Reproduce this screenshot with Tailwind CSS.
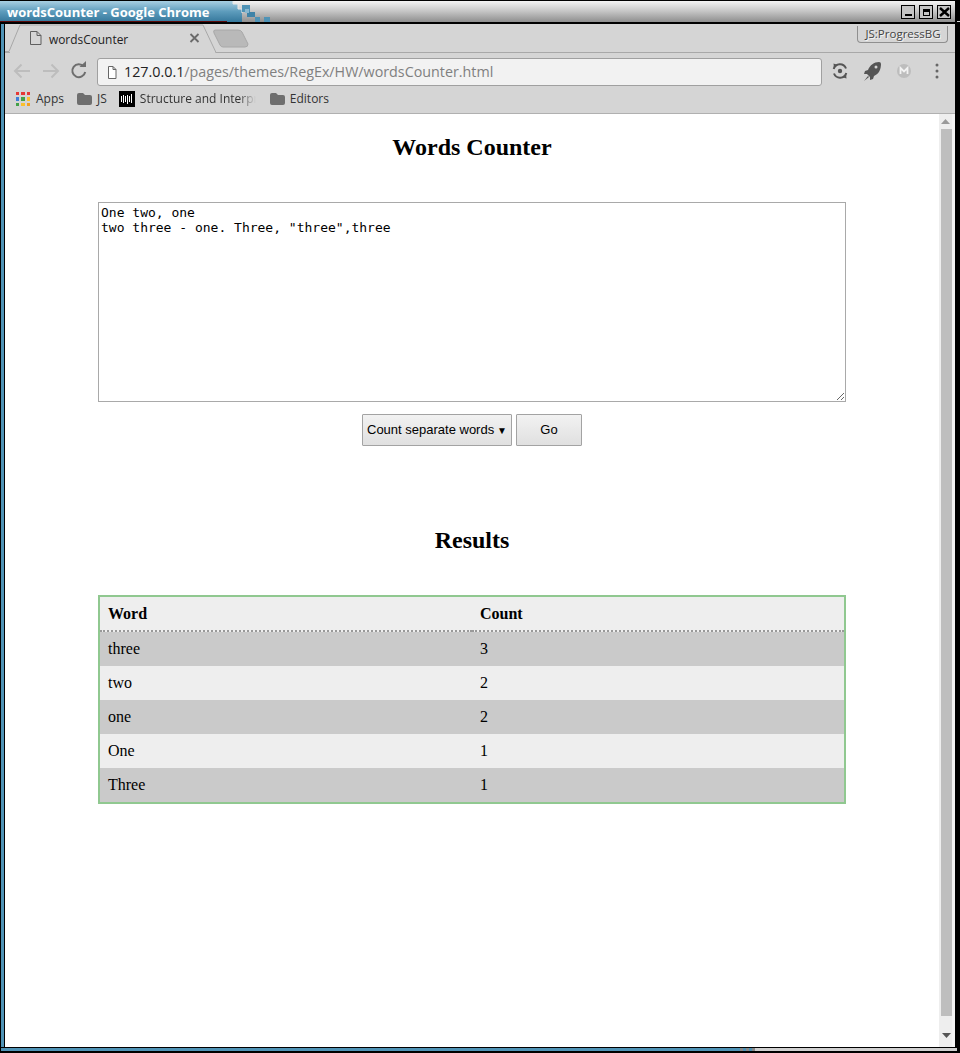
<!DOCTYPE html>
<html lang="en">
<head>
  <meta charset="UTF-8" />
  <title>wordsCounter</title>
  <script src="https://cdn.jsdelivr.net/npm/@tailwindcss/browser@4"></script>
</head>
<body class="bg-white overflow-hidden">
<div class="w-[960px] h-[1053px] flex flex-col bg-black overflow-hidden">

  <!-- window title bar -->
  <div class="relative h-[22px] shrink-0 flex bg-black pt-[1px]">
    <div class="w-[228px] h-full shrink-0 bg-gradient-to-b from-[#a8cfe2] via-[#5d9cbc] to-[#35789c] pl-[7px] text-white font-bold text-[13px] leading-[23px] font-['Open_Sans',sans-serif] whitespace-nowrap">wordsCounter - Google Chrome</div>
    <div class="w-[727px] h-full relative bg-gradient-to-b from-[#f4f4f4] via-[#c4c4c4] to-[#8f8f8f] flex">
      <svg width="48" height="21" class="shrink-0">
        <defs>
          <linearGradient id="titleBlue" x1="0" y1="0" x2="0" y2="1">
            <stop offset="0" stop-color="#a8cfe2"/><stop offset="0.5" stop-color="#5d9cbc"/><stop offset="1" stop-color="#35789c"/>
          </linearGradient>
        </defs>
        <path d="M0 0 H5 V3 H10 V8 H14 V21 H0Z" fill="url(#titleBlue)"/>
        <path d="M5 0 V3 H10 V8 H14 V12" fill="none" stroke="#e8e8e8"/>
        <rect x="14" y="4" width="8" height="7" fill="#4f93b6"/>
        <rect x="19" y="11" width="8" height="5" fill="#3f83a8"/>
        <rect x="27" y="16" width="5" height="5" fill="#4f93b6"/>
        <rect x="36" y="16" width="6" height="5" fill="#4f93b6"/>
        <rect x="17" y="8" width="4" height="4" fill="#8ab8d0"/>
      </svg>
      <div class="flex-1"></div>
      <div class="flex items-start gap-[4px] pr-[4px] pt-[4px]">
        <div class="w-[14px] h-[14px] bg-[#c4c4c4] border border-black flex items-end justify-center pb-[2px]"><div class="w-[7px] h-[2px] bg-black"></div></div>
        <div class="w-[14px] h-[14px] bg-[#c4c4c4] border border-black flex items-center justify-center"><div class="w-[7px] h-[7px] border border-black border-t-[3px]"></div></div>
        <div class="w-[14px] h-[14px] bg-[#c4c4c4] border border-black flex items-center justify-center">
          <svg width="11" height="10"><path d="M1 1 L10 9 M10 1 L1 9" stroke="#000" stroke-width="2.4"/></svg>
        </div>
      </div>
    </div>
    <div class="absolute left-0 bottom-0 w-[227px] h-[1px] bg-[#5a0a0a]"></div>
    <div class="absolute right-0 bottom-0 w-[3px] h-[1px] bg-[#d8d8d8]"></div>
  </div>
  <div class="h-[2px] shrink-0 bg-black"></div>

  <div class="flex-1 flex min-h-0">
    <!-- left frame -->
    <div class="w-[1px] bg-black"></div>
    <div class="w-[3px] bg-[#4f93b6]"></div>
    <div class="w-[1px] bg-black"></div>

    <div class="w-[950px] flex flex-col min-h-0 bg-white">
      <!-- tab strip -->
      <div class="relative h-[29px] shrink-0 bg-[#d5d5d5] border-b border-[#a8a8a8] font-['Open_Sans',sans-serif]">
        <svg width="250" height="29" class="absolute left-0 top-0">
          <path d="M0 27.5 H4 L15 1 H198 L211 28.5" fill="#d5d5d5" stroke="#a8a8a8"/>
          <path d="M5 29 H210" stroke="#d5d5d5" stroke-width="2"/>
          <path d="M210 6 H233 Q236 6 237 8 L243 20 Q243 23 240 23 H218 Q216 23 215 21 L209 9 Q208 6 210 6Z" fill="#b9b9b9" stroke="#a8a8a8"/>
          <path d="M25.500 7.500 H32 L36 11.500 V20.500 H25.500Z M32 7.500 V11.500 H36" fill="none" stroke="#5f5f5f"/>
          <path d="M185.500 10 L193.500 18 M193.500 10 L185.500 18" stroke="#6a6a6a" stroke-width="1.800"/>
        </svg>
        <span class="absolute left-[44px] top-[5px] text-[11.900px] leading-[20px] text-[#222]">wordsCounter</span>
        <div class="absolute right-[7px] top-[2px] w-[91px] h-[17px] pl-[1px] border border-t-0 border-[#8f8f8f] rounded-b-[4px] text-[11.500px] leading-[15px] text-center text-[#444] [text-shadow:1px_1px_0_#f4f4f4] whitespace-nowrap">JS:ProgressBG</div>
      </div>

      <!-- toolbar -->
      <div class="h-[34px] shrink-0 bg-[#d5d5d5] flex items-center relative">
        <svg width="92" height="34" class="shrink-0">
          <path d="M25 18 H10 M16.500 11.500 L10 18 L16.500 24.500" fill="none" stroke="#bdbdbd" stroke-width="2"/>
          <path d="M38 18 H53 M46.500 11.500 L53 18 L46.500 24.500" fill="none" stroke="#bdbdbd" stroke-width="2"/>
          <path d="M78.800 13.500 A6.500 6.500 0 1 0 80.200 19" fill="none" stroke="#6e6e6e" stroke-width="2"/>
          <path d="M74.500 14 H81 V8Z" fill="#6e6e6e"/>
        </svg>
        <div class="w-[725px] h-[28px] mt-[3px] bg-[#f2f2f2] border border-[#a0a0a0] rounded-[3px] flex items-center font-['Open_Sans',sans-serif] text-[14.3px] whitespace-nowrap">
          <svg width="26" height="26" class="shrink-0"><path d="M10.500 7.500 H15 L18 10.500 V19.500 H10.500Z M15 7.500 V10.500 H18" fill="#fff" stroke="#666"/></svg>
          <span class="text-[#222]">127.0.0.1</span><span class="text-[#808080]">/pages/themes/RegEx/HW/wordsCounter.html</span>
        </div>
        <svg width="125" height="34" class="shrink-0 ml-[1px]">
          <path d="M10.700 16 A6.500 6.500 0 0 1 23 15.500" fill="none" stroke="#555" stroke-width="2"/>
          <path d="M23.300 20 A6.500 6.500 0 0 1 11 20.500" fill="none" stroke="#555" stroke-width="2"/>
          <path d="M10.500 10.500 L15 12 L11 15.500Z M23.500 25.500 L19 24 L23 20.500Z" fill="#555"/>
          <circle cx="17" cy="18" r="2.200" fill="#555"/>
          <g transform="translate(1,0)">
            <path d="M55 9 C50 9 46 12 44 17 L41 18 L40 21 L43 21 L46 24 L46 27 L49 26 L50 23 C55 21 57 16 57 11 Q57 9 55 9Z" fill="#555"/>
            <path d="M40 28 L44 23 L45 24Z" fill="#555"/>
            <circle cx="52" cy="14" r="1.500" fill="#d5d5d5"/>
          </g>
          <circle cx="81" cy="18" r="7" fill="#bdbdbd"/>
          <path d="M77.500 21 V15 L81 18.500 L84.500 15 V21" fill="none" stroke="#f2f2f2" stroke-width="1.800"/>
          <circle cx="114" cy="12" r="1.500" fill="#666"/><circle cx="114" cy="18" r="1.500" fill="#666"/><circle cx="114" cy="24" r="1.500" fill="#666"/>
        </svg>
      </div>

      <!-- bookmarks -->
      <div class="h-[27px] shrink-0 bg-[#d5d5d5] border-b border-[#b0b0b0] relative flex items-center pb-[2px] font-['Open_Sans',sans-serif] text-[12px] text-[#333] whitespace-nowrap">
        <div class="grid grid-cols-3 gap-[2px] w-[14px] h-[14px] ml-[11px]">
          <i class="bg-[#e53935]"></i><i class="bg-[#e53935]"></i><i class="bg-[#e53935]"></i>
          <i class="bg-[#3f7fd8]"></i><i class="bg-[#43a047]"></i><i class="bg-[#fbc02d]"></i>
          <i class="bg-[#43a047]"></i><i class="bg-[#fbc02d]"></i><i class="bg-[#f4a020]"></i>
        </div>
        <span class="ml-[6px]">Apps</span>
        <svg width="15" height="12" class="ml-[13px] shrink-0"><path d="M0 2 Q0 0 2 0 H6 L8 2 H13 Q15 2 15 4 V10 Q15 12 13 12 H2 Q0 12 0 10Z" fill="#6e6e6e"/></svg>
        <span class="ml-[5px]">JS</span>
        <div class="ml-[12px] w-[16px] h-[16px] bg-black flex items-center justify-center shrink-0">
          <svg width="14" height="12"><path d="M1.500 3 V9 M3.500 2 V10 M5.500 3 V9 M7.500 2 V11 M9.500 3 V9 M11.500 1 V10" stroke="#fff"/></svg>
        </div>
        <span class="ml-[5px] w-[116px] h-[18px] overflow-hidden [mask-image:linear-gradient(to_right,#000_85%,transparent)]">Structure and Interpr</span>
        <svg width="15" height="12" class="ml-[14px] shrink-0"><path d="M0 2 Q0 0 2 0 H6 L8 2 H13 Q15 2 15 4 V10 Q15 12 13 12 H2 Q0 12 0 10Z" fill="#6e6e6e"/></svg>
        <span class="ml-[5px]">Editors</span>
      </div>

      <!-- page + scrollbar -->
      <div class="flex-1 flex min-h-0">
        <main class="w-[934px] bg-white font-['Liberation_Serif',serif] text-black">
          <h1 class="text-[24px] leading-[28px] font-bold text-center mt-[19px]">Words Counter</h1>
          <div class="mt-[41px] mx-[93px]">
            <textarea class="block w-[748px] h-[200px] border border-[#a9a9a9] bg-white px-[2px] py-[2px] font-['DejaVu_Sans_Mono',monospace] text-[13px] leading-[15px] text-black">One two, one
two three - one. Three, "three",three</textarea>
          </div>
          <div class="mt-[12px] flex justify-center gap-[4px] font-['Liberation_Sans',sans-serif] text-[13px] text-black">
            <div class="w-[150px] h-[32px] border border-[#a3a3a3] rounded-[1px] bg-gradient-to-b from-[#f2f2f2] to-[#e0e0e0] flex items-center justify-between pl-[4px] pr-[4px] whitespace-nowrap">
              <span>Count separate words</span><span class="text-[10px]">▼</span>
            </div>
            <div class="w-[66px] h-[32px] border border-[#a3a3a3] rounded-[1px] bg-gradient-to-b from-[#f2f2f2] to-[#e0e0e0] flex items-center justify-center">Go</div>
          </div>
          <h2 class="text-[24px] leading-[28px] font-bold text-center mt-[80px]">Results</h2>
          <div class="mt-[41px] mx-[93px] w-[748px] border-2 border-[#90c890]">
            <table class="w-full table-fixed border-separate border-spacing-0 text-[16px] leading-[18px]">
              <thead>
                <tr class="bg-[#eeeeee]">
                  <th class="h-[35px] px-[8px] text-left font-bold border-b-2 border-dotted border-[#999999]">Word</th>
                  <th class="h-[35px] px-[8px] text-left font-bold border-b-2 border-dotted border-[#999999]">Count</th>
                </tr>
              </thead>
              <tbody>
                <tr class="bg-[#cacaca]"><td class="h-[34px] px-[8px]">three</td><td class="px-[8px]">3</td></tr>
                <tr class="bg-[#eeeeee]"><td class="h-[34px] px-[8px]">two</td><td class="px-[8px]">2</td></tr>
                <tr class="bg-[#cacaca]"><td class="h-[34px] px-[8px]">one</td><td class="px-[8px]">2</td></tr>
                <tr class="bg-[#eeeeee]"><td class="h-[34px] px-[8px]">One</td><td class="px-[8px]">1</td></tr>
                <tr class="bg-[#cacaca]"><td class="h-[34px] px-[8px]">Three</td><td class="px-[8px]">1</td></tr>
              </tbody>
            </table>
          </div>
        </main>
        <div class="w-[13px] bg-[#eeeeee] flex flex-col items-end">
          <svg width="9" height="5" class="mt-[5px] mr-[2px] shrink-0"><path d="M0 5 L4.500 0 L9 5Z" fill="#9a9a9a"/></svg>
          <div class="w-[11px] h-[887px] mt-[5px] bg-[#bebebe]"></div>
          <svg width="9" height="5" class="mt-[17px] mr-[1px] shrink-0"><path d="M0 0 L4.500 5 L9 0Z" fill="#555"/></svg>
        </div>
        <div class="w-[3px] bg-[#f4f4f4]"></div>
      </div>
    </div>
    <div class="flex-1 bg-black"></div>
  </div>

  <!-- bottom frame -->
  <div class="h-[6px] shrink-0 bg-black flex flex-col">
    <div class="h-[1px]"></div>
    <div class="h-[3px] flex ml-[1px] mr-[3px]">
      <div class="w-[736px] bg-[#4f93b6]"></div>
      <div class="w-[18px] bg-[repeating-linear-gradient(to_right,#4f93b6_0_3px,#8a8a8a_3px_6px)]"></div>
      <div class="flex-1 bg-[#d0d0d0]"></div>
    </div>
  </div>
</div>
</body>
</html>
